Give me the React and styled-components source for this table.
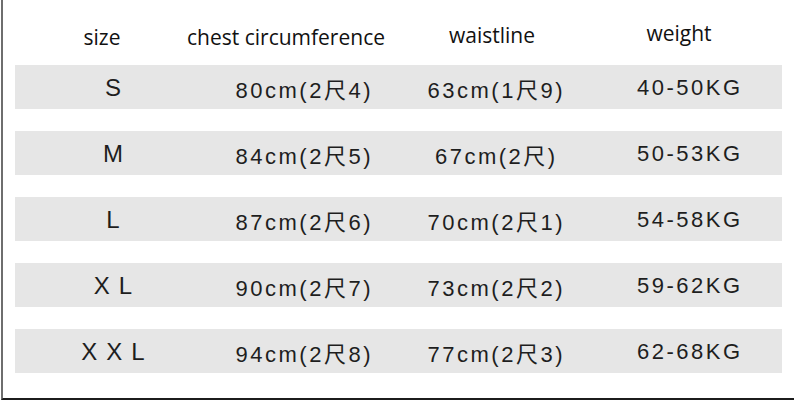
import * as React from "react";
import styled, { createGlobalStyle } from "styled-components";

const GlobalStyle = createGlobalStyle`
  html, body {
    margin: 0;
    padding: 0;
    background: #ffffff;
  }
`;

const columns = "196px 184px 200px 187px";

const Frame = styled.div`
  box-sizing: border-box;
  width: 793px;
  height: 400px;
  margin-left: 1px;
  border-left: 2px solid #6e6e6e;
  border-bottom: 2px solid #1c1c1c;
  padding: 0 12px 0 12px;
  background: #ffffff;
`;

const HeaderRow = styled.div`
  display: grid;
  grid-template-columns: ${columns};
  height: 65px;
  box-sizing: border-box;
  padding-top: 23px;
`;

const HeaderCell = styled.div`
  display: flex;
  justify-content: center;
  min-width: 0;
  font-family: "Open Sans", "Noto Sans", sans-serif;
  font-size: 21px;
  line-height: 28px;
  color: #111111;
  white-space: nowrap;
  padding-left: ${({ $dx = 0 }) => Math.max($dx, 0) * 2}px;
  padding-right: ${({ $dx = 0 }) => Math.max(-$dx, 0) * 2}px;
  margin-top: ${({ $dy = 0 }) => $dy}px;
`;

const Body = styled.div`
  display: flex;
  flex-direction: column;
  gap: 22px;
`;

const Row = styled.div`
  display: grid;
  grid-template-columns: ${columns};
  align-items: center;
  height: 44px;
  background: #e6e6e6;
`;

const Cell = styled.div`
  font-family: "Liberation Sans", "Noto Sans CJK SC", sans-serif;
  font-size: ${({ $size = 22 }) => $size}px;
  letter-spacing: ${({ $spacing = 2.5 }) => $spacing}px;
  padding-left: ${({ $spacing = 2.5 }) => $spacing}px;
  color: #1e1e1e;
  text-align: center;
  padding-top: 2px;
`;

const headers = [
  { label: "size", dx: -11 },
  { label: "chest circumference", dx: -17 },
  { label: "waistline", dx: -3, dy: -2 },
  { label: "weight", dx: -9.5, dy: -4 },
];

const sizes = [
  ["S", "80cm(2尺4)", "63cm(1尺9)", "40-50KG"],
  ["M", "84cm(2尺5)", "67cm(2尺)", "50-53KG"],
  ["L", "87cm(2尺6)", "70cm(2尺1)", "54-58KG"],
  ["XL", "90cm(2尺7)", "73cm(2尺2)", "59-62KG"],
  ["XXL", "94cm(2尺8)", "77cm(2尺3)", "62-68KG"],
];

export default function App() {
  return (
    <>
      <GlobalStyle />
      <Frame>
        <HeaderRow>
          {headers.map((h) => (
            <HeaderCell key={h.label} $dx={h.dx} $dy={h.dy}>
              {h.label}
            </HeaderCell>
          ))}
        </HeaderRow>
        <Body>
          {sizes.map((row) => (
            <Row key={row[0]}>
              {row.map((value, i) =>
                i === 0 ? (
                  <Cell key={i} $size={24} $spacing={9}>
                    {value}
                  </Cell>
                ) : (
                  <Cell key={i}>{value}</Cell>
                )
              )}
            </Row>
          ))}
        </Body>
      </Frame>
    </>
  );
}
